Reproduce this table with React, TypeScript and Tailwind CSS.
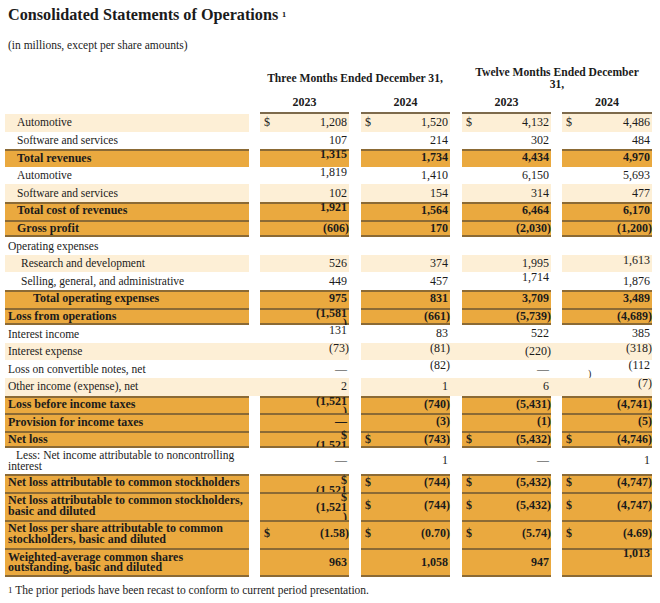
import { Fragment, type ReactNode } from "react";

type Align = "t" | "c";
type Cell = { v?: string; d?: boolean; a?: Align; node?: ReactNode };
type Row = {
  label: ReactNode;
  indent: string;
  kind: "o" | "l" | "w";
  h?: string;
  bottom?: boolean;
  band?: boolean;
  bold?: boolean;
  cells: Cell[];
};

const WIDTHS = ["w-[89px]", "w-[89px]", "w-[89px]", "w-[90px]"];
const GAPS = ["w-[11px]", "w-[12px]", "w-[12px]", "w-[11px]"];

// col1 overflow: the number wraps under the "$" and gets clipped by the row
function Wrapped({ lines, shift }: { lines: string[]; shift: string }) {
  return (
    <div className={`flex h-full w-full flex-col items-end overflow-hidden pr-[2px] leading-[10px] ${shift}`}>
      {lines.map((l, i) => (
        <span key={i}>{l}</span>
      ))}
    </div>
  );
}

const rows: Row[] = [
  { label: "Automotive", indent: "pl-[12px]", kind: "l", cells: [{ v: "1,208", d: true }, { v: "1,520", d: true }, { v: "4,132", d: true }, { v: "4,486", d: true }] },
  { label: "Software and services", indent: "pl-[12px]", kind: "w", cells: [{ v: "107" }, { v: "214" }, { v: "302" }, { v: "484" }] },
  { label: "Total revenues", indent: "pl-[12px]", kind: "o", bold: true, cells: [{ v: "1,315", a: "t" }, { v: "1,734" }, { v: "4,434" }, { v: "4,970" }] },
  { label: "Automotive", indent: "pl-[12px]", kind: "w", cells: [{ v: "1,819", a: "t" }, { v: "1,410" }, { v: "6,150" }, { v: "5,693" }] },
  { label: "Software and services", indent: "pl-[12px]", kind: "l", cells: [{ v: "102" }, { v: "154" }, { v: "314" }, { v: "477" }] },
  { label: "Total cost of revenues", indent: "pl-[12px]", kind: "o", bold: true, cells: [{ v: "1,921", a: "t" }, { v: "1,564" }, { v: "6,464" }, { v: "6,170" }] },
  { label: "Gross profit", indent: "pl-[12px]", kind: "o", bold: true, bottom: true, cells: [{ v: "(606)" }, { v: "170" }, { v: "(2,030)" }, { v: "(1,200)" }] },
  { label: "Operating expenses", indent: "pl-[3px]", kind: "w", cells: [{}, {}, {}, {}] },
  { label: "Research and development", indent: "pl-[16px]", kind: "l", cells: [{ v: "526" }, { v: "374" }, { v: "1,995" }, { v: "1,613", a: "t" }] },
  { label: "Selling, general, and administrative", indent: "pl-[16px]", kind: "w", cells: [{ v: "449" }, { v: "457" }, { v: "1,714", a: "t" }, { v: "1,876" }] },
  { label: "Total operating expenses", indent: "pl-[28px]", kind: "o", bold: true, cells: [{ v: "975" }, { v: "831" }, { v: "3,709" }, { v: "3,489" }] },
  {
    label: "Loss from operations", indent: "pl-[3px]", kind: "o", bold: true, bottom: true,
    cells: [{ node: <Wrapped lines={["(1,581", ")"]} shift="pt-[0px]" /> }, { v: "(661)" }, { v: "(5,739)" }, { v: "(4,689)" }],
  },
  { label: "Interest income", indent: "pl-[3px]", kind: "w", cells: [{ v: "131", a: "t" }, { v: "83" }, { v: "522" }, { v: "385" }] },
  { label: "Interest expense", indent: "pl-[3px]", kind: "l", band: true, cells: [{ v: "(73)", a: "t" }, { v: "(81)", a: "t" }, { v: "(220)" }, { v: "(318)", a: "t" }] },
  {
    label: "Loss on convertible notes, net", indent: "pl-[3px]", kind: "w",
    cells: [
      { v: "—" },
      { v: "(82)", a: "t" },
      { v: "—" },
      {
        v: "(112",
        a: "t",
        node: <span className="absolute left-[26px] top-[9px] text-[10px] leading-[10px]">)</span>,
      },
    ],
  },
  { label: "Other income (expense), net", indent: "pl-[3px]", kind: "l", band: true, cells: [{ v: "2" }, { v: "1" }, { v: "6" }, { v: "(7)", a: "t" }] },
  {
    label: "Loss before income taxes", indent: "pl-[3px]", kind: "o", bold: true,
    cells: [{ node: <Wrapped lines={["(1,521", ")"]} shift="pt-[0px]" /> }, { v: "(740)" }, { v: "(5,431)" }, { v: "(4,741)" }],
  },
  { label: "Provision for income taxes", indent: "pl-[3px]", kind: "o", bold: true, cells: [{ v: "—" }, { v: "(3)" }, { v: "(1)" }, { v: "(5)" }] },
  {
    label: "Net loss", indent: "pl-[3px]", kind: "o", bold: true, bottom: true,
    cells: [{ node: <Wrapped lines={["$", "(1,521"]} shift="-mt-[2px]" /> }, { v: "(743)", d: true }, { v: "(5,432)", d: true }, { v: "(4,746)", d: true }],
  },
  {
    label: (
      <span className="block leading-[11px]">
        <span className="pl-[8px]">Less: Net income attributable to noncontrolling</span>
        <br />
        interest
      </span>
    ),
    indent: "pl-[3px]", kind: "w", h: "h-[25.3px]",
    cells: [{ v: "—" }, { v: "1" }, { v: "—" }, { v: "1" }],
  },
  {
    label: "Net loss attributable to common stockholders", indent: "pl-[3px]", kind: "o", bold: true, h: "h-[18px]",
    cells: [{ node: <Wrapped lines={["$", "(1,521"]} shift="pt-[1px]" /> }, { v: "(744)", d: true }, { v: "(5,432)", d: true }, { v: "(4,747)", d: true }],
  },
  {
    label: (
      <>
        Net loss attributable to common stockholders,
        <br />
        basic and diluted
      </>
    ),
    indent: "pl-[3px]", kind: "o", bold: true, h: "h-[28.3px]",
    cells: [{ node: <Wrapped lines={["$", "(1,521", ")"]} shift="pt-[0px]" /> }, { v: "(744)", d: true }, { v: "(5,432)", d: true }, { v: "(4,747)", d: true }],
  },
  {
    label: (
      <>
        Net loss per share attributable to common
        <br />
        stockholders, basic and diluted
      </>
    ),
    indent: "pl-[3px]", kind: "o", bold: true, h: "h-[28px]",
    cells: [{ v: "(1.58)", d: true }, { v: "(0.70)", d: true }, { v: "(5.74)", d: true }, { v: "(4.69)", d: true }],
  },
  {
    label: (
      <>
        Weighted-average common shares
        <br />
        outstanding, basic and diluted
      </>
    ),
    indent: "pl-[3px]", kind: "o", bold: true, bottom: true, h: "h-[28.7px]",
    cells: [{ v: "963" }, { v: "1,058" }, { v: "947" }, { v: "1,013", a: "t" }],
  },
];

function TableRow({ r }: { r: Row }) {
  const bg = r.kind === "o" ? "bg-[#eaa93f]" : r.kind === "l" ? "bg-[#fdefd6]" : "bg-white";
  const line =
    r.kind === "o"
      ? r.bottom
        ? "shadow-[inset_0_2px_0_#8b6a35,inset_0_-2px_0_#8b6a35]"
        : "shadow-[inset_0_2px_0_#8b6a35]"
      : "";
  const weight = r.bold ? "font-bold text-[12px]" : "text-[11.5px]";

  return (
    <div className={`flex ${r.h ?? "h-[17.6px]"}`}>
      <div className={`flex w-[244px] shrink-0 items-center leading-[10.7px] ${bg} ${line} ${r.indent} ${weight}`}>
        {r.label}
      </div>
      {r.cells.map((c, i) => (
        <Fragment key={i}>
          <div className={`${GAPS[i]} shrink-0 ${r.band && i !== 1 ? bg : ""}`} />
          <div
            className={`relative flex shrink-0 leading-[11px] ${WIDTHS[i]} ${bg} ${line} ${
              r.bold ? "font-bold" : ""
            } ${c.a === "t" ? "items-start" : "items-center"} ${c.d ? "justify-between" : "justify-end"} text-[12px]`}
          >
            {c.d && <span className="pl-[4px]">$</span>}
            {c.v && <span className={c.v.endsWith(")") ? "pr-[0px]" : "pr-[2px]"}>{c.v}</span>}
            {c.node}
          </div>
        </Fragment>
      ))}
    </div>
  );
}

export default function App() {
  return (
    <div className="h-[603px] w-[660px] overflow-hidden bg-white font-['Liberation_Serif',serif] text-[#1b1b1b]">
      <div className="mt-[4px] pl-[8px] text-[16.2px] font-bold leading-[22px]">
        Consolidated Statements of Operations <span className="text-[13px]">¹</span>
      </div>
      <div className="mt-[11px] pl-[8px] text-[11.5px] leading-[14px]">(in millions, except per share amounts)</div>

      <div className="mt-[15px] flex h-[24px] pl-[260px] text-[11.6px] font-bold leading-[12px]">
        <div className="flex w-[190px] items-center justify-center text-center">Three Months Ended December 31,</div>
        <div className="w-[12px]" />
        <div className="flex w-[190px] items-center justify-center text-center">
          Twelve Months Ended December
          <br />
          31,
        </div>
      </div>

      <div className="flex h-[23px] pl-[260px] text-[12px] font-bold">
        {["2023", "2024", "2023", "2024"].map((y, i) => (
          <Fragment key={i}>
            {i > 0 && <div className={GAPS[i]} />}
            <div className={`flex ${WIDTHS[i]} items-center justify-center border-b-2 border-[#7d6a4c]`}>{y}</div>
          </Fragment>
        ))}
      </div>

      <div className="pl-[5px]">
        {rows.map((r, i) => (
          <TableRow key={i} r={r} />
        ))}
      </div>

      <div className="mt-[6px] pl-[8px] text-[11.5px] leading-[14px]">
        <span className="text-[9px] align-top">1</span> The prior periods have been recast to conform to current period
        presentation.
      </div>
    </div>
  );
}
